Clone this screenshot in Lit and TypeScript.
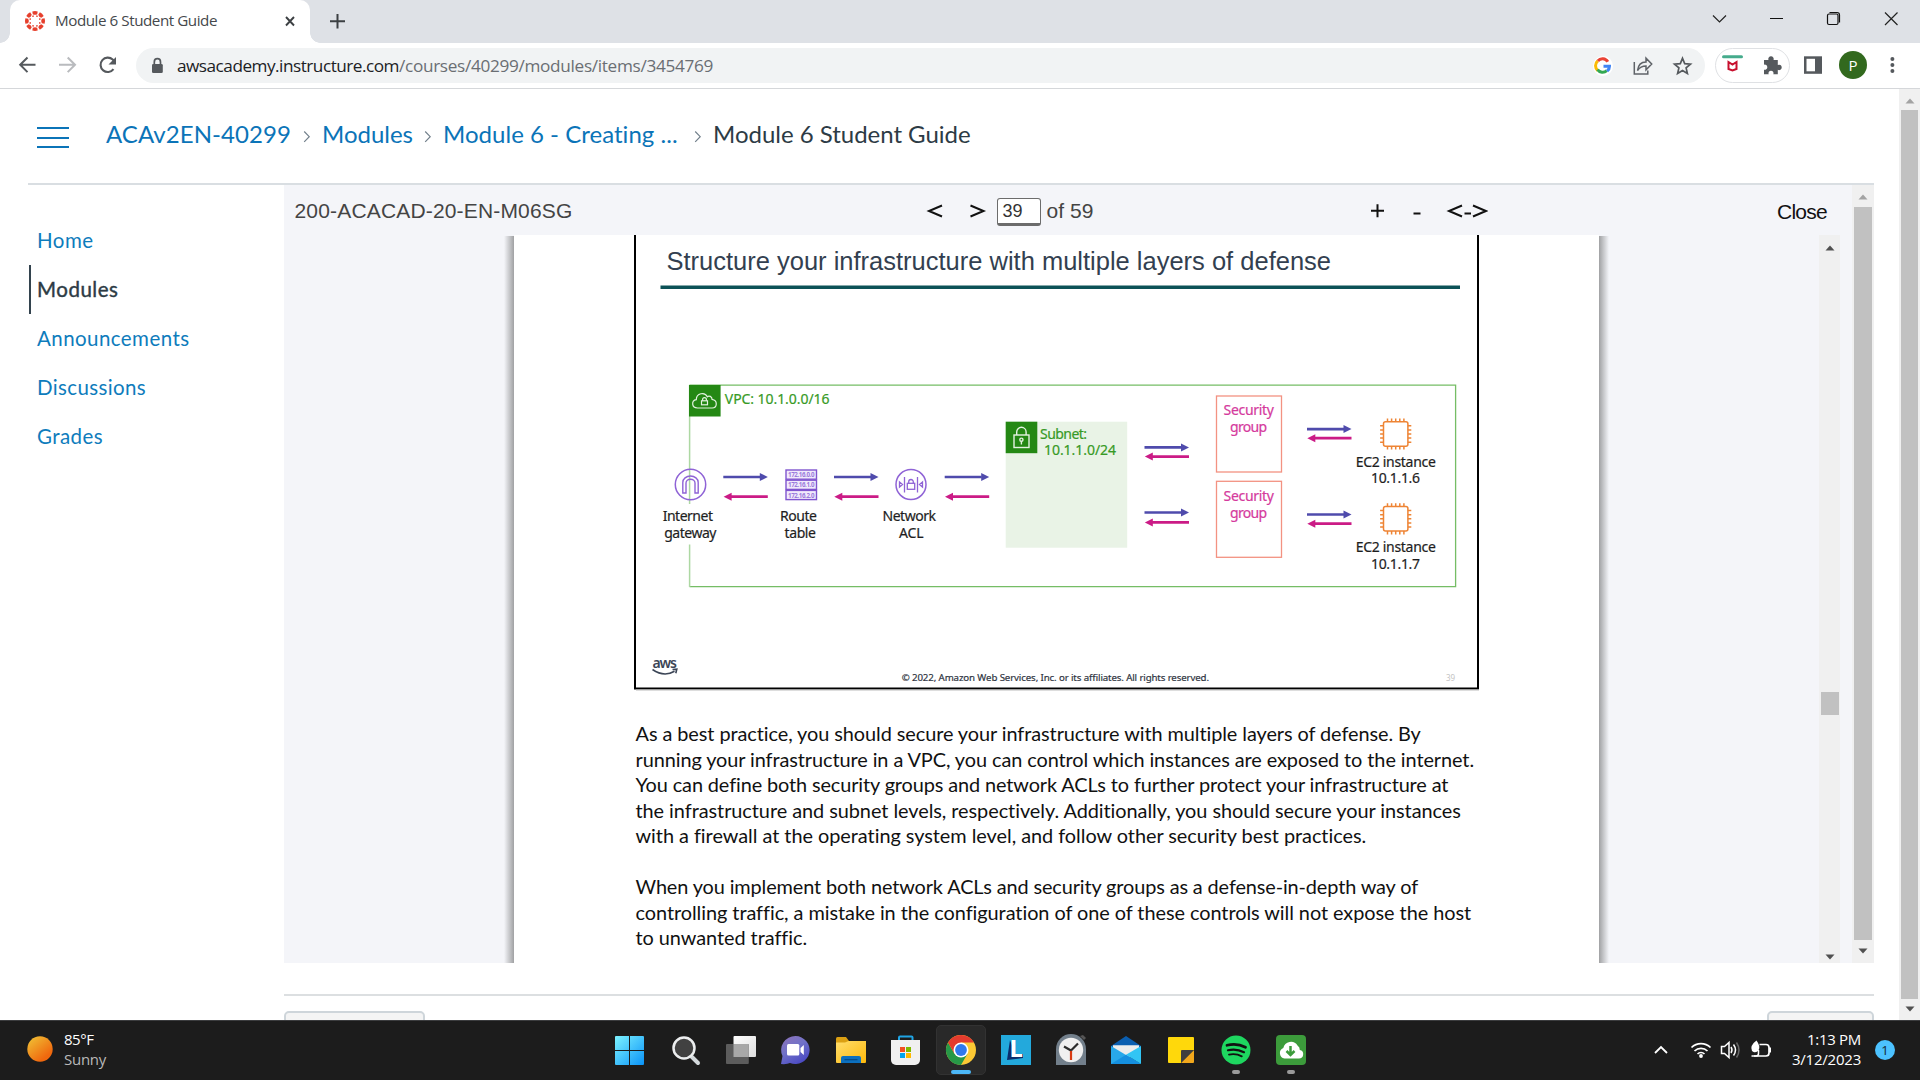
import { LitElement, html, svg, css, type TemplateResult } from "lit";
import { customElement, property } from "lit/decorators.js";

/** A run of text tracked so that it fills a given width. */
@customElement("fit-text")
class FitText extends LitElement {
  @property() text = "";
  @property({ type: Number }) width = 0;
  static styles = css`
    :host { display: inline-block; white-space: pre; }
  `;
  firstUpdated() {
    const span = this.renderRoot.querySelector("span")!;
    const natural = span.getBoundingClientRect().width;
    if (this.width && natural) {
      this.style.letterSpacing = `${(this.width - natural) / this.text.length}px`;
    }
  }
  render() {
    return html`<span>${this.text}</span>`;
  }
}

const fit = (text: string, width: number) =>
  html`<fit-text .text=${text} .width=${width}></fit-text>`;

const icon = (x: number, y: number, w: number, h: number, body: unknown) =>
  html`<svg class="icon" width=${w} height=${h} viewBox="${x} ${y} ${w} ${h}">${body}</svg>`;

const label = (x1: number, x2: number, y: number, text: string, cls = "lbl") =>
  svg`<text class=${cls} x=${x1} y=${y} textLength=${x2 - x1}>${text}</text>`;

const arrows = (x: number, y1: number, y2: number) => svg`
  <path d="M${x} ${y1}h37" stroke="#4f4bac" stroke-width="2.7"/>
  <path d="M${x + 36.5} ${y1 - 4}l8 4l-8 4z" fill="#4f4bac"/>
  <path d="M${x + 44.5} ${y2}h-37" stroke="#cb1b86" stroke-width="2.7"/>
  <path d="M${x + 8.3} ${y2 - 4}l-8 4l8 4z" fill="#cb1b86"/>`;

const chip = (cx: number, cy: number) => {
  const pins = [-8.2, -4.1, 0, 4.1, 8.2];
  return svg`<g stroke="#ee8434" stroke-width="1.5" fill="none">
    <rect x=${cx - 12.2} y=${cy - 12.2} width="24.4" height="24.4" rx="2"/>
    ${pins.map((p) => svg`<path d="M${cx + p} ${cy - 15.6}v3.4M${cx + p} ${cy + 12.2}v3.4M${cx - 15.6} ${cy + p}h3.4M${cx + 12.2} ${cy + p}h3.4"/>`)}
  </g>`;
};

const securityGroup = (y: number) => svg`
  <rect x="1216.5" y=${y} width="65" height="76" fill="#fff" stroke="#f39282" stroke-width="1.3"/>
  ${label(1223.5, 1274, y + 19.4, "Security", "lbl pink")}
  ${label(1230, 1267, y + 36.2, "group", "lbl pink")}`;

const slide = svg`
  <path d="M635 235V688.5H1478V235" fill="none" stroke="#000" stroke-width="2"/>
  <path d="M636 690H1479" stroke="#bbb"/>
  ${label(666.5, 1331, 270, "Structure your infrastructure with multiple layers of defense", "title")}
  <path d="M660.5 287.3H1460" stroke="#0c5257" stroke-width="3.4"/>

  <path d="M689.5 385.2H1455.6V586.6H689.5" fill="none" stroke="#75bd65" stroke-width="1.3"/>
  <path d="M689.6 385V504M689.6 544.5V587" stroke="#add8a3" stroke-width="1.5"/>
  <rect x="689" y="385" width="31.6" height="31.5" fill="#248814"/>
  <g fill="none" stroke="#e4f2e1" stroke-width="1.2">
    <path d="M697.5 408c-6 0-6.400-7.500-1.200-8.300c0-6.500 8.500-8.300 11-3c1.800-1.500 4.700-.2 4.800 2.700c5.800 1 5.300 8.600 0 8.600z"/>
    <rect x="701.500" y="400.800" width="6" height="4"/><path d="M702.600 400.800v-1.200a1.900 1.900 0 0 1 3.800 0v1.200"/>
  </g>
  ${label(724.8, 829.5, 404, "VPC: 10.1.0.0/16", "lbl green")}

  <circle cx="690.5" cy="484.500" r="15.200" fill="none" stroke="#8f63d6" stroke-width="1.500"/>
  <path d="M682.800 493v-10.500a7.700 6.500 0 0 1 15.400 0V493h-3.200v-10a4.500 3.700 0 0 0-9 0v10z" fill="none" stroke="#8f63d6" stroke-width="1.400"/>
  ${label(662.7, 713, 521.3, "Internet")}${label(664.2, 716.5, 537.8, "gateway")}
  ${arrows(723.3, 477, 496.7)}

  ${[0, 1, 2].map((i) => svg`
    <rect x="786" y=${470 + i * 10.2} width="30.500" height="9.200" fill="#f1eafb" stroke="#8055cf" stroke-width="1.400"/>
    ${label(788, 814.5, 477.2 + i * 10.2, `172.16.${i}.0`, "tiny")}`)}
  ${label(780, 817, 521.3, "Route")}${label(784.5, 816, 537.8, "table")}
  ${arrows(834, 477, 496.7)}

  <circle cx="911" cy="484.500" r="15" fill="none" stroke="#8f63d6" stroke-width="1.500"/>
  <g fill="none" stroke="#8f63d6" stroke-width="1.300">
    <path d="M904.500 477v15.500M917.500 477v15.500M899.500 482l3 2.500l-3 2.500zM922.500 482l-3 2.500l3 2.500z"/>
    <rect x="907.300" y="483.300" width="7.400" height="6"/><path d="M908.700 483.300v-1.500a2.300 2.300 0 0 1 4.600 0v1.500"/>
  </g>
  ${label(882.5, 936, 521.3, "Network")}${label(899, 923.5, 537.5, "ACL")}
  ${arrows(944.7, 477, 496.7)}

  <rect x="1005.700" y="421.700" width="121.500" height="126" fill="#e9f3e6"/>
  <rect x="1005.700" y="421.700" width="31.600" height="31.500" fill="#248814"/>
  <g fill="none" stroke="#e4f2e1" stroke-width="1.400">
    <rect x="1014" y="435" width="15" height="12.500"/>
    <path d="M1016.700 435v-3a4.700 4.700 0 0 1 9.400 0v3M1021.400 441v3.500"/><circle cx="1021.400" cy="439.700" r="1.600"/>
  </g>
  ${label(1040, 1087, 438.5, "Subnet:", "lbl green")}
  ${label(1044, 1116, 455, "10.1.1.0/24", "lbl green")}
  ${arrows(1144.5, 447.4, 456.6)}${arrows(1144.5, 512.5, 522.4)}
  ${securityGroup(396)}${securityGroup(481.3)}
  ${arrows(1307, 429.1, 438.2)}${arrows(1307, 514.500, 523.700)}
  ${chip(1395.700, 434)}${chip(1395.700, 518.800)}
  ${label(1355.7, 1435.8, 466.8, "EC2 instance")}${label(1371, 1420, 483.300, "10.1.1.6")}
  ${label(1355.7, 1435.8, 552.2, "EC2 instance")}${label(1371, 1420, 568.7, "10.1.1.7")}

  ${label(652.500, 677, 668, "aws", "aws")}
  <path d="M652.500 669.500q11.500 8 22 1.800M672.500 669.500l4.300-.3l-1 4" fill="none" stroke="#3b4556" stroke-width="1.600"/>
  ${label(901.700, 1209, 680.500, "© 2022, Amazon Web Services, Inc. or its affiliates. All rights reserved.", "copy")}
  ${label(1446, 1455, 680.500, "39", "num")}`;

const paragraphs: [string, number][][] = [
  [
    ["As a best practice, you should secure your infrastructure with multiple layers of defense. By", 786],
    ["running your infrastructure in a VPC, you can control which instances are exposed to the internet.", 838.5],
    ["You can define both security groups and network ACLs to further protect your infrastructure at", 812.5],
    ["the infrastructure and subnet levels, respectively. Additionally, you should secure your instances", 826],
    ["with a firewall at the operating system level, and follow other security best practices.", 731],
  ],
  [
    ["When you implement both network ACLs and security groups as a defense-in-depth way of", 782.5],
    ["controlling traffic, a mistake in the configuration of one of these controls will not expose the host", 834.5],
    ["to unwanted traffic.", 170.5],
  ],
];

const nav: [string, number][] = [
  ["Home", 56.5], ["Modules", 81.5], ["Announcements", 152.5], ["Discussions", 109], ["Grades", 66],
];

const crumbSep = html`<svg class="icon sep" width="8" height="16" viewBox="0 0 8 16"><path d="M1.200 4.500l5 5.200l-5 5.200" fill="none" stroke="#73818c" stroke-width="1.200"/></svg>`;

const taskIcons: TemplateResult<2>[] = [
  svg`<defs><linearGradient id="w" x1="615" y1="1036" x2="644" y2="1065" gradientUnits="userSpaceOnUse"><stop offset="0" stop-color="#7df3ff"/><stop offset="1" stop-color="#0a93f8"/></linearGradient></defs>
    <path d="M616 1036h13v14h-14v-13a1 1 0 0 1 1-1zM630 1036h13a1 1 0 0 1 1 1v13h-14zM615 1051h14v14h-13a1 1 0 0 1-1-1zM630 1051h14v13a1 1 0 0 1-1 1h-13z" fill="url(#w)"/>`,
  svg`<path d="M692 1057l6 6" stroke="#d3d8db" stroke-width="4" stroke-linecap="round"/><circle cx="684" cy="1048" r="10.500" fill="#414141" stroke="#eceeef" stroke-width="2.500"/>`,
  svg`<defs><linearGradient id="tv" x1="0" y1="0" x2="1" y2="1"><stop offset="0" stop-color="#fff"/><stop offset="1" stop-color="#dedede"/></linearGradient></defs>
    <rect x="733.500" y="1036" width="22.500" height="21" rx="1" fill="url(#tv)"/><rect x="726" y="1044" width="22.800" height="20" rx="1" fill="#5c5c5c"/><rect x="733.500" y="1044" width="15.300" height="13" fill="#a8a8a8"/>`,
  svg`<defs><linearGradient id="ch" x1="0" y1="0" x2=".6" y2="1"><stop offset="0" stop-color="#8f72b8"/><stop offset=".5" stop-color="#7172c8"/><stop offset="1" stop-color="#4c4bc4"/></linearGradient></defs>
    <path d="M795.500 1036a14.300 14 0 1 1-5.500 27q-3 1.500-9 1l1.500-8a14.300 14 0 0 1 13-20z" fill="url(#ch)"/>
    <rect x="787" y="1044" width="12.300" height="11.500" rx="1.500" fill="#fff"/><path d="M800.500 1048l3.300-3v10l-3.300-3z" fill="#fff"/>`,
  svg`<defs><linearGradient id="f" x1="0" y1="0" x2="1" y2="1"><stop offset="0" stop-color="#ffdd6c"/><stop offset="1" stop-color="#fdb90b"/></linearGradient></defs>
    <path d="M836 1038.500a1.500 1.500 0 0 1 1.500-1.500h8.500l3 4v8h-13z" fill="#dba013"/><path d="M836 1042.500h9l3.500-1.500h17.500v21a1 1 0 0 1-1 1h-28a1 1 0 0 1-1-1z" fill="url(#f)"/>
    <path d="M841 1063v-5a2 2 0 0 1 2-2h16a2 2 0 0 1 2 2v5z" fill="#0c70bf"/><path d="M844.500 1059.700h13" stroke="#044a86" stroke-width="1.200"/>`,
  svg`<path d="M899 1041v-3.500a1 1 0 0 1 1-1h11.500a1 1 0 0 1 1 1v3.500" fill="none" stroke="#1fa4e4" stroke-width="2"/><path d="M891 1040h29v20a5 5 0 0 1-5 5h-19a5 5 0 0 1-5-5z" fill="#f0f0f0"/>
    <path fill="#f25022" d="M900 1047h5v5h-5z"/><path fill="#7fba00" d="M906 1047h5v5h-5z"/><path fill="#00a4ef" d="M900 1053h5v5h-5z"/><path fill="#ffb900" d="M906 1053h5v5h-5z"/>`,
  svg`<rect x="936.500" y="1025.500" width="49" height="49" rx="4.500" fill="#292929" stroke="#323232"/>
    <circle cx="961" cy="1050" r="15" fill="#fcc934"/>
    <path d="M961 1050L948 1042.500A15 15 0 0 1 974 1042.500H961z" fill="#e33b2e"/>
    <path d="M948 1042.500A15 15 0 0 0 961 1065L967.500 1053.700L961 1050L954.500 1053.700z" fill="#279847"/>
    <path d="M948 1042.500L954.500 1053.700L961 1042.500z" fill="#e33b2e"/>
    <circle cx="961" cy="1050" r="7.500" fill="#fff"/><circle cx="961" cy="1050" r="5.900" fill="#3079ec"/>
    <rect x="951" y="1070" width="20" height="4" rx="2" fill="#4cb8f8"/>`,
  svg`<rect x="1001" y="1035" width="30" height="30" fill="#23a9dc"/><path d="M1010 1040l-3 20l16-2v-4h-8z" fill="#0b2c6b"/><text class="ell" x="1009.500" y="1057">L</text>`,
  svg`<path d="M1080 1036l4 4l2-2l-3-3z" fill="#555"/><path d="M1056 1065v-16a15 15 0 0 1 30 0v16z" fill="#727f8b"/><circle cx="1071" cy="1050" r="12.200" fill="#f0f0f0"/>
    <path d="M1071 1050.500l7-7M1071 1050.500l-7-4" stroke="#2c2c2c" stroke-width="2.200"/><path d="M1071 1051v9" stroke="#d83b12" stroke-width="2.200"/>`,
  svg`<path d="M1111 1046l15-10l15 10v2h-30z" fill="#0a5eb0"/><path d="M1113 1045.200h26v8l-13 6l-13-6z" fill="#ececec"/>
    <path d="M1111 1046l30 18h-30z" fill="#28a8ea"/><path d="M1141 1046v18l-15-9.300z" fill="#32c5f4"/><path d="M1111 1064l15-9.300l15 9.300z" fill="#1590e0"/>`,
  svg`<path d="M1169 1037h24a1 1 0 0 1 1 1v12l-13 13h-12a1 1 0 0 1-1-1v-24a1 1 0 0 1 1-1z" fill="#ffd80b"/><path d="M1194 1050v12a1 1 0 0 1-1 1h-12z" fill="#f2a81c"/><path d="M1181 1063v-12a1 1 0 0 1 1-1h12z" fill="#3f3f3f"/>`,
  svg`<circle cx="1236" cy="1050" r="14.500" fill="#1ed760"/><g fill="none" stroke="#111" stroke-linecap="round"><path d="M1227 1045.300q10-2.500 18.500 2" stroke-width="2.700"/><path d="M1228 1050.200q8.500-2 16 2" stroke-width="2.200"/><path d="M1229 1054.600q7-1.500 12.800 1.800" stroke-width="1.800"/></g>
    <rect x="1232" y="1070" width="8" height="4" rx="2" fill="#9a9a9a"/>`,
  svg`<rect x="1276" y="1035" width="30" height="30" rx="4" fill="#3c9b3b"/><path d="M1284.500 1058.500a5.500 5.500 0 0 1-1.200-10.500a7.800 7.800 0 0 1 14.200-2.500a5 5 0 0 1 2.300 4.500a4.300 4.300 0 0 1-1 8.500z" fill="#fff"/>
    <path d="M1290.500 1046v8M1286.500 1051l4 4l4-4" fill="none" stroke="#3c9b3b" stroke-width="2.500"/><rect x="1287" y="1070" width="8" height="4" rx="2" fill="#9a9a9a"/>`,
];

@customElement("app-root")
class AppRoot extends LitElement {
  static styles = css`
    :host { display: block; width: 1920px; height: 1080px; overflow: hidden; background: #fff; font-family: "Open Sans", "Noto Sans", sans-serif; }
    * { box-sizing: border-box; }
    .icon { display: block; flex: none; }
    .window { display: flex; flex-direction: column; height: 1080px; }
    .grow { flex: 1; }

    .tabs { display: flex; height: 43px; background: #dee1e6; flex: none; align-items: center; }
    .tab { position: relative; display: flex; align-items: center; width: 300px; height: 43px; margin-left: 10px; background: #fff; border-radius: 10px 10px 0 0; font-size: 15.2px; color: #45484c; }
    .tab::before, .tab::after { content: ""; position: absolute; bottom: 0; width: 10px; height: 10px; }
    .tab::before { left: -10px; background: radial-gradient(circle at 0 0, #dee1e6 9.500px, #fff 10px); }
    .tab::after { right: -10px; background: radial-gradient(circle at 100% 0, #dee1e6 9.500px, #fff 10px); }
    .tab fit-text { margin-bottom: 3px; }

    .bar { display: flex; height: 46px; flex: none; align-items: center; padding-bottom: 1px; border-bottom: 1px solid #d5d7da; }
    .omni { display: flex; align-items: center; width: 1569px; height: 35px; margin-left: 9px; border-radius: 18px; background: #f1f3f4; font-size: 17.200px; color: #6a6e73; }
    .omni fit-text { display: block; padding-top: 1px; }
    .domain { color: #202124; }
    .pill { display: flex; align-items: center; width: 75px; height: 35px; margin-left: 10px; border: 1px solid #dfe1e4; border-radius: 18px; }
    .avatar { width: 28px; height: 28px; border-radius: 50%; background: #32691e; color: #fff; font-size: 15px; line-height: 28px; text-align: center; margin: 0 7px; }

    .body { display: flex; flex: 1; min-height: 0; }
    .page { width: 1899px; padding: 0 25px 0 28px; font-family: Lato, sans-serif; }
    .crumbs { display: flex; height: 96px; border-bottom: 2px solid #d9dee2; padding: 0 0 5px 9px; align-items: center; font-size: 24px; line-height: 30px; color: #0b74b8; }
    .burger { display: flex; flex-direction: column; gap: 7.500px; width: 32px; margin: 8px 37px 0 0; }
    .burger i { height: 2px; background: #0b74b8; }
    .sep { margin-top: 3px; }
    .here { color: #2d3b45; }
    .main { display: flex; }
    .nav { display: flex; flex-direction: column; width: 256px; padding-top: 31.400px; font-size: 20.500px; color: #0e7cbc; }
    .nav div { height: 48.800px; line-height: 48.500px; padding-left: 9px; }
    .nav .on { color: #2d3b45; border-left: 2px solid #33434e; margin-left: 1px; padding-left: 6px; -webkit-text-stroke: .4px #2d3b45; }
    .frame { width: 1590px; }

    .viewer { display: flex; height: 778px; background: #f4f5f9; }
    .reader { width: 1568px; display: flex; flex-direction: column; }
    .head { display: flex; align-items: center; height: 50px; padding: 3px 25px 0 10.500px; font: 21px/30px "Liberation Sans", Arial, sans-serif; color: #444; }
    .head > fit-text { margin-bottom: 2px; }
    .cmd { color: #111; }
    .box { width: 44px; height: 28px; margin: 1px 5.500px 0 -3px; background: #fff; border: 1.500px solid #6c6c6c; border-bottom-width: 3px; border-radius: 3px; padding-left: 4.500px; line-height: 25px; font-size: 18px; color: #333; }
    .doc { display: flex; height: 728px; }
    .gutter { width: 220px; }
    .edge { width: 10px; margin-top: 1px; }
    .edge.l { background: linear-gradient(to right, #f4f5f9, #a0a1a3); }
    .edge.r { background: linear-gradient(to left, #f4f5f9, #a0a1a3); }
    .sheet { width: 1085px; background: #fff; }
    .prose { padding: 27.400px 0 0 121.500px; font: 19.900px/25.500px Lato, sans-serif; color: #111; }
    .prose p { margin: 0 0 25.500px; }
    .prose fit-text { display: block; }

    .scroll { width: 21px; background: #f0f0f0; display: flex; flex-direction: column; align-items: center; }
    .scroll b { width: 17px; background: #c1c1c1; }
    .scroll.outer { width: 22px; }
    .scroll.outer b { width: 18px; }
    .inner { margin-left: 210px; }
    .inner b { width: 18px; }
    .foot { margin-top: 31px; border-top: 2px solid #dcdfe1; padding-top: 15px; display: flex; justify-content: space-between; height: 26px; overflow: hidden; }
    .foot i { height: 40px; border: 2px solid #ced5da; border-radius: 5px; background: #f4f4f4; }
    .prev { width: 141px; }
    .next { width: 107px; }

    .task { display: flex; height: 60px; flex: none; background: #1c1c1c; color: #fff; font-size: 15px; line-height: 20px; box-shadow: inset 0 1px #3b3c3e; }
    .weather { width: 538px; padding: 9px 0 0 0; }
    .weather div + div { color: #b9b9b9; }
    .clock { width: 79px; padding-top: 9px; text-align: right; }

    text { font-family: "Noto Sans", "Open Sans", sans-serif; }
    .lbl { font-size: 14px; fill: #1e1e1e; stroke: #1e1e1e; stroke-width: .2px; }
    .green { fill: #379a25; stroke: #379a25; }
    .pink { fill: #d53a9d; stroke: #d53a9d; }
    .title { font: 25.500px "Liberation Sans", Arial, sans-serif; fill: #333f50; }
    .tiny { font-size: 6.200px; font-weight: 700; fill: #9a79dc; }
    .aws { font-size: 14px; font-weight: 600; fill: #3b4556; }
    .copy { font-size: 9.700px; fill: #2f3542; stroke: #2f3542; stroke-width: .2px; }
    .num { font-size: 8px; fill: #c4c4c4; }
    .ell { font-size: 24px; font-weight: 700; fill: #fff; }
    .one { font-size: 13px; fill: #16303f; text-anchor: middle; }
  `;

  chrome() {
    const ring = [0, 45, 90, 135, 180, 225, 270, 315];
    return html`
      <div class="tabs">
        <div class="tab">
          ${icon(10, 0, 45, 43, svg`${ring.map((a) => svg`<path d="M32.300 11.400Q35 10.500 37.700 11.400L37.200 14.200Q35 15.500 32.800 14.200z" fill="#e63f2c" transform="rotate(${a} 35 21)"/><circle cx="35" cy="15.800" r="0.850" fill="#e63f2c" transform="rotate(${a + 22.5} 35 21)"/>`)}`)}
          ${fit("Module 6 Student Guide", 162)}
          <span class="grow"></span>
          ${icon(270, 0, 40, 43, svg`<path d="M286 17l8 8.500M294 17l-8 8.500" stroke="#3c4043" stroke-width="1.900"/>`)}
        </div>
        ${icon(310, 0, 54, 43, svg`<path d="M337.500 14v14.500M330 21.300h15" stroke="#3c4043" stroke-width="2"/>`)}
        <span class="grow"></span>
        ${icon(1690, 0, 58, 43, svg`<path d="M1713 15.500l6.500 6.500l6.500-6.500" fill="none" stroke="#222" stroke-width="1.200"/>`)}
        ${icon(1748, 0, 57, 43, svg`<path d="M1770 18.500h13" stroke="#111"/>`)}
        ${icon(1805, 0, 57, 43, svg`<g fill="none" stroke="#111" stroke-width="1.200"><rect x="1827.500" y="14" width="10.500" height="10.500" rx="1.500"/><path d="M1829.500 12.500h7.500a2.500 2.500 0 0 1 2.500 2.500v7.500"/></g>`)}
        ${icon(1862, 0, 58, 43, svg`<path d="M1885 12.500l12.500 12.500M1897.500 12.500l-12.500 12.500" stroke="#222" stroke-width="1.200"/>`)}
      </div>
      <div class="bar">
        ${icon(0, 43, 47, 44, svg`<path d="M35.500 64.800H20.500M27.500 57.500l-7.300 7.300l7.300 7.300" fill="none" stroke="#55595d" stroke-width="2"/>`)}
        ${icon(47, 43, 40, 44, svg`<path d="M59 64.800h15.500M67.700 57.500l7.300 7.300l-7.300 7.300" fill="none" stroke="#b9bbbe" stroke-width="2"/>`)}
        ${icon(87, 43, 40, 44, svg`<path d="M113.500 69.200a7.200 7.200 0 1 1-.8-9.600l2 2" fill="none" stroke="#55595d" stroke-width="2.100"/><path d="M116 57v7.500h-7.500z" fill="#55595d"/>`)}
        <div class="omni">
          ${icon(136, 48, 41, 35, svg`<rect x="152" y="64" width="10.800" height="9" rx="1.300" fill="#55595d"/><path d="M154.300 64v-2a3.100 3.300 0 0 1 6.200 0v2" fill="none" stroke="#55595d" stroke-width="1.700"/>`)}
          <span class="domain">${fit("awsacademy.instructure.com", 222)}</span>
          ${fit("/courses/40299/modules/items/3454769", 314)}
          <span class="grow"></span>
          ${icon(1583, 48, 39, 35, svg`<circle cx="1603" cy="66" r="10" fill="#fff"/><g fill="none" stroke-width="3"><path d="M1607.800 61.800a6 6 0 0 0-10-.8" stroke="#ea4335"/><path d="M1597.700 61a6.300 6.300 0 0 0 0 9.500" stroke="#fbbc05"/><path d="M1597.500 69.700a6.200 6.200 0 0 0 9.300 1" stroke="#34a853"/><path d="M1603.500 66.200h6q0 3-2.400 5" stroke="#4285f4"/></g>`)}
          ${icon(1622, 48, 40, 35, svg`<g fill="none" stroke="#5f6368" stroke-width="1.500"><path d="M1634.300 62v12h13.500v-3.500"/><path d="M1637.500 70.500q1-8.500 8.500-8.500v-3.800l5.700 5.800l-5.700 5.800v-3.800q-5.500 0-8.500 4.500z"/></g>`)}
          ${icon(1662, 48, 43, 35, svg`<path d="M1682.500 58.300l2.200 5.300l5.800.5l-4.400 3.800l1.300 5.600l-4.900-3l-4.900 3l1.300-5.600l-4.400-3.800l5.800-.5z" fill="none" stroke="#55595d" stroke-width="1.700"/>`)}
        </div>
        <div class="pill">
          ${icon(1716, 49, 36, 33, svg`<rect x="1722" y="55.300" width="21" height="3" rx="1.500" fill="#45ab8c"/><path d="M1728.500 62l4 2.500l4-2.500v7l-4 1.500l-4-1.500z" fill="none" stroke="#c8102e" stroke-width="2"/>`)}
          ${icon(1752, 49, 36, 33, svg`<path d="M1764 60h4.500a2.700 2.700 0 1 1 5 0h4.300v5a2.700 2.700 0 1 1 0 4.800v4.400h-4.500a2.500 2.500 0 1 0-4.600 0h-4.700v-4.500a2.600 2.600 0 1 0 0-5z" fill="#55595d"/>`)}
        </div>
        ${icon(1790, 43, 42, 44, svg`<path d="M1804 56.300h18v17.500h-18z" fill="#55595d"/><path d="M1806.500 58.800h8.500v12.500h-8.500z" fill="#fff"/>`)}
        <div class="avatar">P</div>
        ${icon(1874, 43, 40, 44, svg`<g fill="#55595d"><circle cx="1892.400" cy="59" r="2"/><circle cx="1892.400" cy="65" r="2"/><circle cx="1892.400" cy="71" r="2"/></g>`)}
      </div>`;
  }

  render() {
    return html`<div class="window">
      ${this.chrome()}
      <div class="body">
        <div class="page">
          <div class="crumbs">
            <div class="burger"><i></i><i></i><i></i></div>
            ${fit("ACAv2EN-40299", 185)}${this.sep(12, 11)}
            ${fit("Modules", 91)}${this.sep(11, 11)}
            ${fit("Module 6 - Creating ...", 235)}${this.sep(16, 11.5)}
            <span class="here">${fit("Module 6 Student Guide", 257.5)}</span>
          </div>
          <div class="main">
            <div class="nav">${nav.map(([n, w], i) => html`<div class=${i === 1 ? "on" : ""}>${fit(n, w)}</div>`)}</div>
            <div class="frame">
              <div class="viewer">
                <div class="reader">
                  <div class="head">
                    ${fit("200-ACACAD-20-EN-M06SG", 278)}
                    <svg class="icon" width="427.500" height="30" viewBox="572.500 197.500 427.500 30"><g fill="none" stroke="#111" stroke-width="2"><path d="M941.500 206l-13 5.500l13 5.500M970 206l13 5.500l-13 5.500"/></g></svg>
                    <span class="box">39</span>
                    ${fit("of 59", 47)}
                    <svg class="icon" width="394.500" height="30" viewBox="1093.500 197.500 394.500 30"><g fill="none" stroke="#111" stroke-width="2"><path d="M1370.500 211.300h13M1377 204.800v13M1413 214h7M1461.500 206l-13 5.500l13 5.500M1464 214h6.500M1472.500 206l13 5.500l-13 5.500"/></g></svg>
                    <span class="grow"></span>
                    <span class="cmd">${fit("Close", 50)}</span>
                  </div>
                  <div class="doc">
                    <span class="gutter"></span>
                    <span class="edge l"></span>
                    <div class="sheet">
                      ${icon(514, 235, 1085, 459, slide)}
                      <div class="prose">${paragraphs.map((p) => html`<p>${p.map(([s, w]) => fit(s, w))}</p>`)}</div>
                    </div>
                    <span class="edge r"></span>
                    <div class="scroll inner">
                      ${this.tri(23, 13, "#505050", -1)}
                      <span style="height:434px"></span><b style="height:23px"></b><span class="grow"></span>
                      ${this.tri(15, 9, "#505050", 1)}
                    </div>
                  </div>
                </div>
                <div class="scroll outer">
                  ${this.tri(22, 12, "#a3a3a3", -1)}<b style="height:733px"></b>${this.tri(23, 11, "#505050", 1)}
                </div>
              </div>
              <div class="foot"><i class="prev"></i><i class="next"></i></div>
            </div>
          </div>
        </div>
        <div class="scroll">
          ${this.tri(21, 12, "#a3a3a3", -1)}<b style="height:889px"></b>${this.tri(21, 10, "#505050", 1)}
        </div>
      </div>
      <div class="task">
        ${icon(0, 1020, 64, 60, svg`<defs><linearGradient id="s" x1=".1" y1="0" x2=".9" y2="1"><stop offset=".1" stop-color="#f0b630"/><stop offset=".8" stop-color="#f0680e"/></linearGradient></defs><circle cx="40" cy="1049" r="12.700" fill="url(#s)"/>`)}
        <div class="weather"><div>${fit("85°F", 29.5)}</div><div>${fit("Sunny", 42)}</div></div>
        ${taskIcons.map((b, i) => icon(602 + 55 * i, 1020, 55, 60, b))}
        <span class="grow"></span>
        ${icon(1640, 1020, 42, 60, svg`<path d="M1655 1053l6-6l6 6" fill="none" stroke="#fff" stroke-width="1.800"/>`)}
        ${icon(1682, 1020, 36, 60, svg`<g fill="none" stroke="#fff" stroke-width="1.700"><path d="M1691.500 1047.500a13.500 13.500 0 0 1 19 0M1694.500 1051a9.300 9.300 0 0 1 13 0M1697.500 1054a5 5 0 0 1 7 0"/></g><circle cx="1701" cy="1056" r="1.900" fill="#fff"/>`)}
        ${icon(1718, 1020, 28, 60, svg`<g fill="none" stroke="#fff" stroke-width="1.500"><path d="M1721.500 1046.500h3l4.500-4v15l-4.500-4h-3zM1731 1047q2 3 0 6M1733.500 1044.500q4 5.500 0 11"/><path d="M1736.500 1042.500q5 7.500 0 15" stroke="#666"/></g>`)}
        ${icon(1746, 1020, 36, 60, svg`<path d="M1759.500 1044.500h6.500a3 3 0 0 1 3 3v5.500a3 3 0 0 1-3 3h-12" fill="none" stroke="#fff" stroke-width="1.700"/><path d="M1769 1047.500h2v5h-2z" fill="#fff"/><path d="M1752 1051q-2.500-5.500 4.500-10.500q4.500 6 2 10q-2 2.500-5 1.500z" fill="#fff"/><path d="M1758.500 1050v3.500q0 2.500-2.500 2.500h-4.500" fill="none" stroke="#fff" stroke-width="1.500"/>`)}
        <div class="clock"><div>${fit("1:13 PM", 54)}</div><div>${fit("3/12/2023", 69)}</div></div>
        ${icon(1861, 1020, 59, 60, svg`<circle cx="1885" cy="1050" r="10" fill="#4cc2ff"/><text class="one" x="1885" y="1054.500">1</text>`)}
      </div>
    </div>`;
  }

  sep(l: number, r: number) {
    return html`<span style="width:${l}px"></span>${crumbSep}<span style="width:${r}px"></span>`;
  }

  tri(h: number, y: number, color: string, dir: number) {
    return html`<svg class="icon" width="14" height=${h} viewBox="0 0 14 ${h}"><path d="M2.500 ${y - dir * 2.5}h9l-4.500 ${dir * 5}z" fill=${color}/></svg>`;
  }
}
